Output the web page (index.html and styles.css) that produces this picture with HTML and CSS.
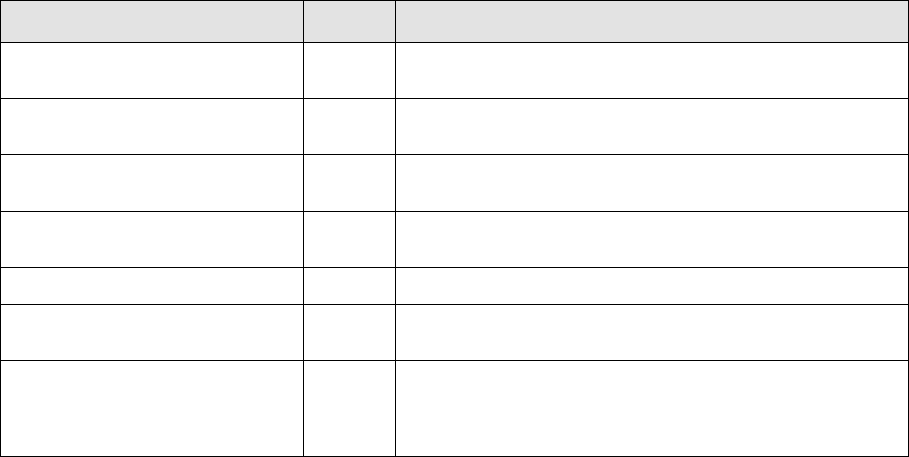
FILE: index.html
```html
<!DOCTYPE html>
<html lang="en">
<head>
<meta charset="utf-8">
<title>Table</title>
<link rel="stylesheet" href="styles.css">
</head>
<body>
<div class="grid" role="table">
  <div class="cell head" role="columnheader"></div>
  <div class="cell head" role="columnheader"></div>
  <div class="cell head" role="columnheader"></div>

  <div class="cell"></div><div class="cell"></div><div class="cell"></div>
  <div class="cell"></div><div class="cell"></div><div class="cell"></div>
  <div class="cell"></div><div class="cell"></div><div class="cell"></div>
  <div class="cell"></div><div class="cell"></div><div class="cell"></div>
  <div class="cell"></div><div class="cell"></div><div class="cell"></div>
  <div class="cell"></div><div class="cell"></div><div class="cell"></div>
  <div class="cell"></div><div class="cell"></div><div class="cell"></div>
</div>
</body>
</html>
```
FILE: styles.css
```css
html, body {
  margin: 0;
  padding: 0;
  background: #ffffff;
  font-family: "Liberation Sans", Arial, sans-serif;
}

.grid {
  display: grid;
  width: 909px;
  box-sizing: border-box;
  padding: 1px;
  gap: 1px;
  background: #000000;
  grid-template-columns: 302px 91px 512px;
  grid-template-rows: 41px 55.2px 55.2px 55.2px 55.2px 35.9px 55.2px 95px;
}

.cell {
  background: #ffffff;
}

.cell.head {
  background: #e3e3e3;
}
```
